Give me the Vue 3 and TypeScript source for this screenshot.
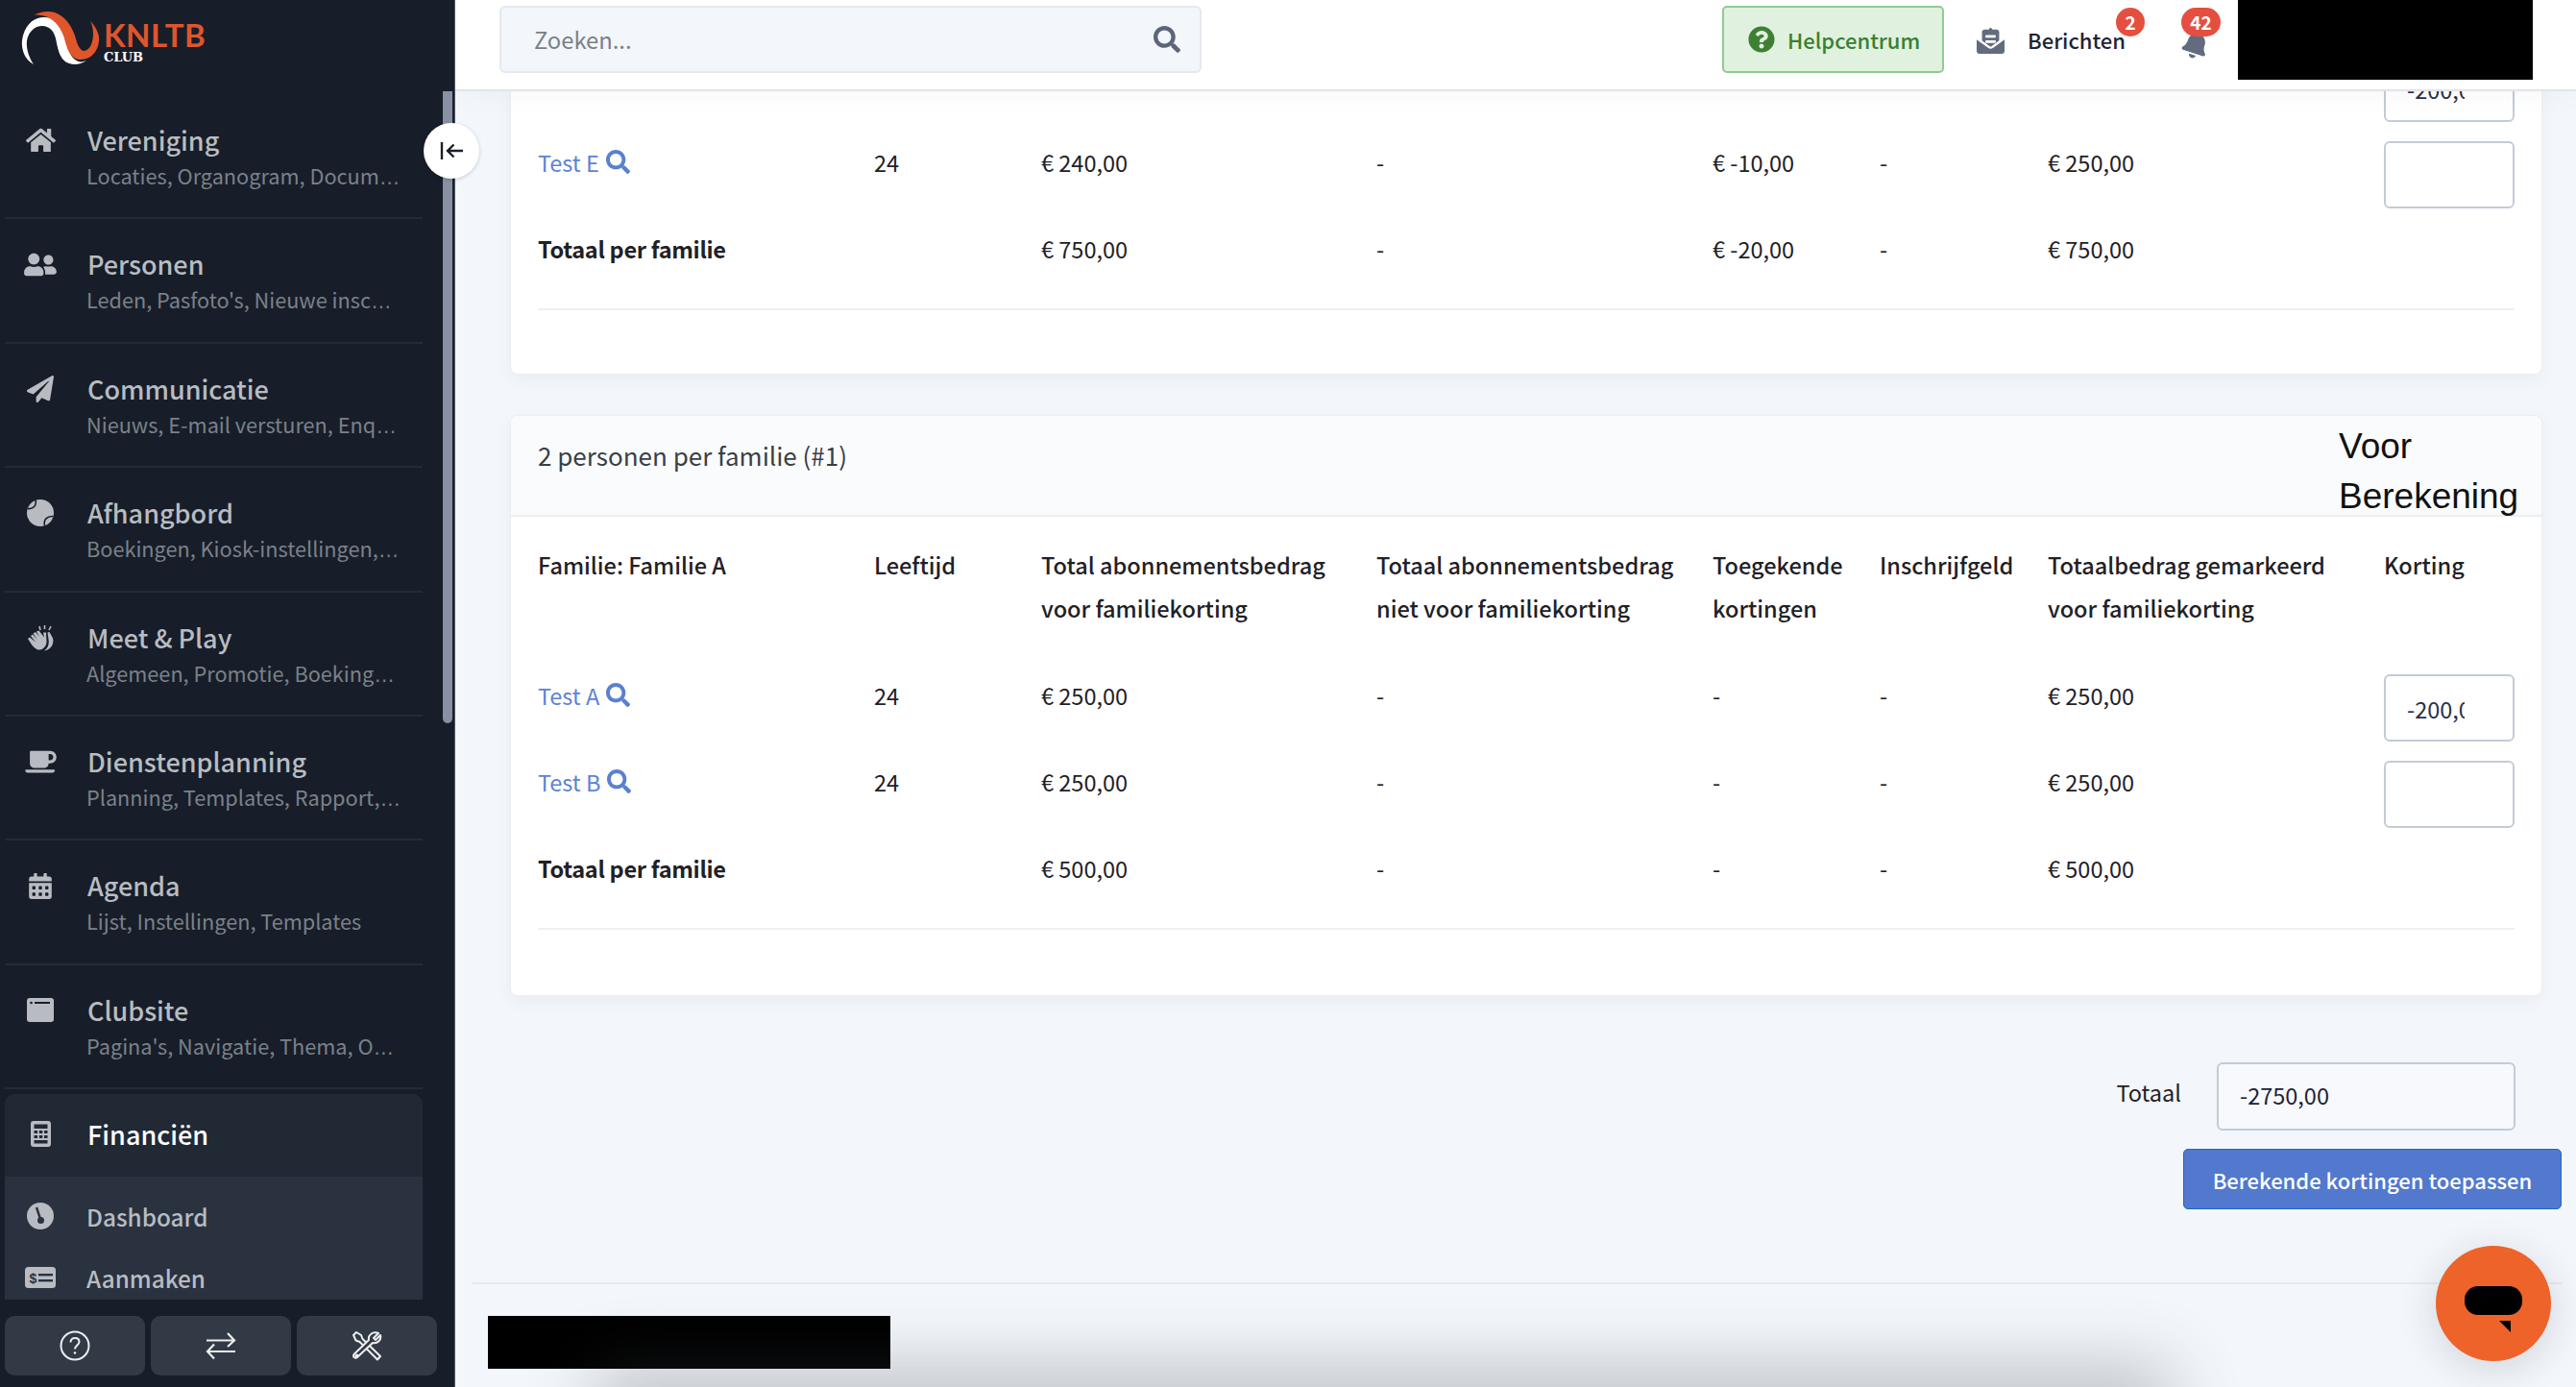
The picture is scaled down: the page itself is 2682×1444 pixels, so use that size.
<script setup lang="ts">
interface NavItem { title: string; sub: string; cut: boolean; icon: string }
const navItems: NavItem[] = [
  { title: 'Vereniging', sub: 'Locaties, Organogram, Docum', cut: true, icon: 'home' },
  { title: 'Personen', sub: "Leden, Pasfoto's, Nieuwe insc", cut: true, icon: 'users' },
  { title: 'Communicatie', sub: 'Nieuws, E-mail versturen, Enq', cut: true, icon: 'plane' },
  { title: 'Afhangbord', sub: 'Boekingen, Kiosk-instellingen,', cut: true, icon: 'ball' },
  { title: 'Meet & Play', sub: 'Algemeen, Promotie, Boeking', cut: true, icon: 'clap' },
  { title: 'Dienstenplanning', sub: 'Planning, Templates, Rapport,', cut: true, icon: 'coffee' },
  { title: 'Agenda', sub: 'Lijst, Instellingen, Templates', cut: false, icon: 'calendar' },
  { title: 'Clubsite', sub: "Pagina's, Navigatie, Thema, O", cut: true, icon: 'window' },
]
const columns = [
  ['Familie: Familie A'],
  ['Leeftijd'],
  ['Total abonnementsbedrag', 'voor familiekorting'],
  ['Totaal abonnementsbedrag', 'niet voor familiekorting'],
  ['Toegekende', 'kortingen'],
  ['Inschrijfgeld'],
  ['Totaalbedrag gemarkeerd', 'voor familiekorting'],
  ['Korting'],
]
const rowsA = [
  { name: 'Test A', age: '24', total: '€ 250,00', other: '-', granted: '-', fee: '-', marked: '€ 250,00', korting: '-200,00' },
  { name: 'Test B', age: '24', total: '€ 250,00', other: '-', granted: '-', fee: '-', marked: '€ 250,00', korting: '' },
]
const searchPath = 'M505 442.7L405.3 343c-4.5-4.5-10.6-7-17-7H372c27.6-35.3 44-79.7 44-128C416 93.1 322.9 0 208 0S0 93.1 0 208s93.1 208 208 208c48.3 0 92.7-16.4 128-44v16.3c0 6.4 2.5 12.5 7 17l99.7 99.7c9.4 9.4 24.6 9.4 33.9 0l28.3-28.3c9.4-9.4 9.4-24.6.1-34zM208 336c-70.7 0-128-57.2-128-128 0-70.7 57.2-128 128-128 70.7 0 128 57.2 128 128 0 70.7-57.2 128-128 128z'
</script>

<template>
  <div class="page">
    <aside class="sidebar">
      <div class="logo">
        <svg class="logo-mark" viewBox="0 0 110 75" width="110" height="75">
          <path fill="#ffffff" d="M35 67C25 62 22 50 23 42C25 28 33 19 44 18C54 17 62 23 66 34C69 45 72 58 78 62C82 65 85 65 90 63C84 67 78 68 72 66C62 63 60 50 58 40C56 32 51 27 44 27C36 27 30 33 28 42C27 50 30 60 35 67Z" />
          <path fill="#e0552c" d="M35 16C42 12 50 11 57 13C68 17 74 26 78 37C80 44 82 52 87 53C94 53 97 43 97 36C97 30 96 26 94 22C100 28 104 36 103 43C102 53 95 62 84 62C74 62 70 52 67 40C64 30 58 22 50 18C45 16 40 15 35 16Z" />
        </svg>
        <div class="logo-text">
          <span class="logo-knltb">KNLTB</span>
          <span class="logo-club">CLUB</span>
        </div>
      </div>

      <nav class="nav">
        <div v-for="item in navItems" :key="item.title" class="nav-item">
          <span class="nav-icon">
            <svg v-if="item.icon === 'home'" viewBox="0 0 576 512" width="31" height="28"><path fill="currentColor" d="M280.37 148.26L96 300.11V464a16 16 0 0 0 16 16l112.06-.29a16 16 0 0 0 15.92-16V368a16 16 0 0 1 16-16h64a16 16 0 0 1 16 16v95.64a16 16 0 0 0 16 16.05L464 480a16 16 0 0 0 16-16V300L295.67 148.26a12.19 12.19 0 0 0-15.3 0zM571.6 251.47L488 182.56V44.05a12 12 0 0 0-12-12h-56a12 12 0 0 0-12 12v72.61L318.47 43a48 48 0 0 0-61 0L4.34 251.47a12 12 0 0 0-1.6 16.9l25.5 31A12 12 0 0 0 45.15 301l235.22-193.74a12.19 12.19 0 0 1 15.3 0L530.9 301a12 12 0 0 0 16.9-1.6l25.5-31a12 12 0 0 0-1.7-16.93z" /></svg>
            <svg v-else-if="item.icon === 'users'" viewBox="0 0 640 512" width="34" height="27"><path fill="currentColor" d="M192 256c61.9 0 112-50.1 112-112S253.9 32 192 32 80 82.1 80 144s50.1 112 112 112zm76.8 32h-8.3c-20.8 10-43.9 16-68.5 16s-47.6-6-68.5-16h-8.3C51.6 288 0 339.6 0 403.2V432c0 26.5 21.5 48 48 48h288c26.5 0 48-21.5 48-48v-28.8c0-63.6-51.6-115.2-115.2-115.2zM480 256c53 0 96-43 96-96s-43-96-96-96-96 43-96 96 43 96 96 96zm48 32h-3.8c-13.9 4.8-28.6 8-44.2 8s-30.3-3.2-44.2-8H432c-20.4 0-39.2 5.9-55.7 15.4 24.4 26.3 39.7 61.2 39.7 99.8v38.4c0 2.2-.5 4.3-.6 6.4H592c26.5 0 48-21.5 48-48 0-61.9-50.1-112-112-112z" /></svg>
            <svg v-else-if="item.icon === 'plane'" viewBox="0 0 512 512" width="28" height="28"><path fill="currentColor" d="M476 3.2L12.5 270.6c-18.1 10.4-15.8 35.6 2.2 43.2L121 358.4l287.3-253.2c5.5-4.9 13.3 2.6 8.6 8.3L176 407v80.5c0 23.6 28.5 32.9 42.5 15.8L282 426l124.6 52.2c14.2 6 30.4-2.9 33-18.2l72-432C515 7.8 493.3-6.8 476 3.2z" /></svg>
            <svg v-else-if="item.icon === 'ball'" viewBox="0 0 28 28" width="28" height="28"><circle cx="14" cy="14" r="14" fill="currentColor" /><path d="M9 0.5C10.5 6 6.5 10.5 0.5 9.5" fill="none" stroke="#171e29" stroke-width="1.6" /><path d="M27.5 17.5C21 17 17 21 18.5 27.5" fill="none" stroke="#171e29" stroke-width="1.6" /></svg>
            <svg v-else-if="item.icon === 'clap'" viewBox="0 0 28 28" width="28" height="28"><path fill="currentColor" d="M1 15L3 13.500L9 18.500L4 12L6 10.500L11 16L6.500 9.500L9 8L13 13L10 7.500L12.500 6.500L18 13.500L17 8.500L20 8.500L20.500 18C20.500 24 15 28 10.500 26C7 24.500 4 20 1 15Z" /><path fill="currentColor" d="M21.500 8.500L23.500 8L27 14.500C28.500 20 25.500 26.500 18 27.500C22 24.500 23 21 22.700 17Z" /><path d="M14 6L13 2M18.500 5L18.500 1M23 6L25 2" stroke="currentColor" stroke-width="1.600" fill="none" /></svg>
            <svg v-else-if="item.icon === 'coffee'" viewBox="0 0 640 512" width="33" height="26"><path fill="currentColor" d="M192 384h192c53 0 96-43 96-96h32c70.6 0 128-57.4 128-128S582.6 32 512 32H120c-13.3 0-24 10.7-24 24v232c0 53 43 96 96 96zM512 96c35.3 0 64 28.7 64 64s-28.7 64-64 64h-32V96h32zm47.7 384H48.3c-47.6 0-61-64-36-64h583.3c25 0 11.800 64-35.900 64z" /></svg>
            <svg v-else-if="item.icon === 'calendar'" viewBox="0 0 448 512" width="24" height="27"><path fill="currentColor" d="M0 464c0 26.5 21.5 48 48 48h352c26.5 0 48-21.5 48-48V192H0v272zm320-196c0-6.6 5.4-12 12-12h40c6.6 0 12 5.4 12 12v40c0 6.6-5.4 12-12 12h-40c-6.6 0-12-5.4-12-12v-40zm0 128c0-6.6 5.4-12 12-12h40c6.6 0 12 5.4 12 12v40c0 6.6-5.4 12-12 12h-40c-6.6 0-12-5.4-12-12v-40zM192 268c0-6.6 5.4-12 12-12h40c6.6 0 12 5.4 12 12v40c0 6.6-5.4 12-12 12h-40c-6.6 0-12-5.4-12-12v-40zm0 128c0-6.6 5.4-12 12-12h40c6.6 0 12 5.4 12 12v40c0 6.6-5.4 12-12 12h-40c-6.6 0-12-5.4-12-12v-40zM64 268c0-6.6 5.4-12 12-12h40c6.6 0 12 5.4 12 12v40c0 6.6-5.4 12-12 12H76c-6.6 0-12-5.4-12-12v-40zm0 128c0-6.6 5.4-12 12-12h40c6.6 0 12 5.4 12 12v40c0 6.6-5.4 12-12 12H76c-6.6 0-12-5.4-12-12v-40zM400 64h-48V16c0-8.8-7.2-16-16-16h-32c-8.8 0-16 7.2-16 16v48H160V16c0-8.8-7.2-16-16-16h-32c-8.8 0-16 7.2-16 16v48H48C21.5 64 0 85.5 0 112v48h448v-48c0-26.5-21.5-48-48-48z" /></svg>
            <svg v-else viewBox="0 0 28 25" width="28" height="25"><rect width="28" height="25" rx="3" fill="currentColor" /><circle cx="4.500" cy="5" r="1.300" fill="#171e29" /><rect x="8" y="4" width="16" height="2" fill="#171e29" /></svg>
          </span>
          <div class="nav-text">
            <div class="nav-title">{{ item.title }}</div>
            <div class="nav-sub">{{ item.sub }}<span v-if="item.cut" class="dots">…</span></div>
          </div>
        </div>

        <div class="nav-active">
          <span class="nav-icon">
            <svg viewBox="0 0 21 27" width="21" height="27"><rect width="21" height="27" rx="3" fill="currentColor" /><g fill="#212934"><rect x="3.500" y="3.500" width="14" height="4.500" /><rect x="3.500" y="10" width="3.500" height="3" /><rect x="8.800" y="10" width="3.500" height="3" /><rect x="14" y="10" width="3.500" height="3" /><rect x="3.500" y="15" width="3.500" height="3" /><rect x="8.800" y="15" width="3.500" height="3" /><rect x="14" y="15" width="3.500" height="3" /><rect x="3.500" y="20" width="14" height="3.500" /></g></svg>
          </span>
          <span class="active-title">Financiën</span>
        </div>
        <div class="nav-children">
          <div class="child child-first">
            <span class="nav-icon">
              <svg viewBox="0 0 28 28" width="28" height="28"><circle cx="14" cy="14" r="14" fill="currentColor" /><path d="M10 5L14 17" stroke="#2a323f" stroke-width="2.400" /><circle cx="14.500" cy="18.500" r="3.500" fill="#2a323f" /></svg>
            </span>
            <span class="child-title">Dashboard</span>
          </div>
          <div class="child">
            <span class="nav-icon">
              <svg viewBox="0 0 32 22" width="32" height="22"><rect width="32" height="22" rx="3.500" fill="currentColor" /><text x="4.500" y="17" class="money-sign">$</text><rect x="14" y="7" width="15" height="2.400" fill="#2a323f" /><rect x="14" y="13" width="15" height="2.400" fill="#2a323f" /></svg>
            </span>
            <span class="child-title">Aanmaken</span>
          </div>
        </div>
      </nav>

      <div class="tool-row">
        <button class="tool" type="button">
          <svg viewBox="0 0 32 32" width="32" height="32" fill="none" stroke="#eceef0" stroke-width="2"><circle cx="16" cy="16" r="14.500" /><path d="M11.500 12.500C11.500 9.500 14 8 16 8C18.500 8 20.500 9.500 20.500 12C20.500 15.500 16 15.500 16 19.500" /><circle cx="16" cy="23.500" r="1.300" fill="#eceef0" stroke="none" /></svg>
        </button>
        <button class="tool" type="button">
          <svg viewBox="0 0 32 32" width="32" height="32" fill="none" stroke="#eceef0" stroke-width="2.200"><path d="M1 10.500H30M23 3L30 10.500L23 17" /><path d="M31 22H2M9 14.500L2 22L9 29.500" /></svg>
        </button>
        <button class="tool" type="button">
          <svg viewBox="0 0 32 32" width="32" height="32" fill="none" stroke="#eceef0" stroke-width="2" stroke-linejoin="round"><path d="M2 5L5 2L10 5L11.500 9L30 27L27 30.500L8.500 12L4.500 10.500Z" /><path d="M28 3L23 8L25 10L30 5C31.500 10 27 14 22 13L6.500 27.500C4 30.500 0.500 27.500 3 24.500L18 10C17 5 22 0.500 28 3Z" fill="#323a45" /><circle cx="5.500" cy="26.500" r="1" /></svg>
        </button>
      </div>

      <div class="scroll-thumb"></div>
    </aside>

    <button class="collapse" type="button">
      <svg viewBox="0 0 24 20" width="24" height="20" fill="none" stroke="#1d2026" stroke-width="2.400"><path d="M2 1V19" /><path d="M24 10H8M14.500 3.500L8 10L14.500 16.500" /></svg>
    </button>

    <main class="main">
      <header class="topbar">
        <div class="search">
          <span class="search-text">Zoeken...</span>
          <svg viewBox="0 0 512 512" width="28" height="28"><path fill="#5c6579" :d="searchPath" /></svg>
        </div>
        <div class="help">
          <svg viewBox="0 0 512 512" width="28" height="28"><path fill="#3f7f34" d="M504 256c0 136.997-111.043 248-248 248S8 392.997 8 256C8 119.083 119.043 8 256 8s248 111.083 248 248zM262.655 90c-54.497 0-89.255 22.957-116.549 63.758-3.536 5.286-2.353 12.415 2.715 16.258l34.699 26.31c5.205 3.947 12.621 3.008 16.665-2.122 17.864-22.658 30.113-35.797 57.303-35.797 20.429 0 45.698 13.148 45.698 32.958 0 14.976-12.363 22.667-32.534 33.976C247.128 238.528 216 254.941 216 296v4c0 6.627 5.373 12 12 12h56c6.627 0 12-5.373 12-12v-1.333c0-28.462 83.186-29.647 83.186-106.667 0-58.002-60.165-102-116.531-102zM256 338c-25.365 0-46 20.635-46 46 0 25.364 20.635 46 46 46s46-20.636 46-46c0-25.365-20.635-46-46-46z" /></svg>
          <span>Helpcentrum</span>
        </div>
        <div class="messages">
          <svg viewBox="0 0 512 512" width="29" height="29"><path fill="#636b7f" d="M0 250.900V464C0 490.500 21.500 512 48 512H464C490.500 512 512 490.500 512 464V250.900L302.900 401.900C274.900 422.200 237.100 422.200 209.100 401.900Z" /><path fill="#636b7f" fill-rule="evenodd" d="M98 112C98 85.500 119.500 64 146 64H223.500C233 57 243 32 256 32C269 32 279 57 288.500 64H366C392.500 64 414 85.500 414 112V270L270 374C261 380.500 251 380.500 242 374L98 270ZM176 168C167 168 160 175 160 184V200C160 209 167 216 176 216H336C345 216 352 209 352 200V184C352 175 345 168 336 168ZM176 264C167 264 160 271 160 280V296C160 305 167 312 176 312H336C345 312 352 305 352 296V280C352 271 345 264 336 264Z" /></svg>
          <span class="messages-text">Berichten</span>
          <span class="badge badge-small">2</span>
        </div>
        <div class="bell">
          <svg class="bell-icon" viewBox="0 0 448 512" width="26" height="29"><path fill="#636b7f" d="M224 512c35.32 0 63.97-28.65 63.97-64H160.03c0 35.35 28.65 64 63.97 64zm215.39-149.71c-19.32-20.76-55.47-51.99-55.47-154.29 0-77.7-54.48-139.9-127.94-155.16V32c0-17.67-14.32-32-31.98-32s-31.98 14.33-31.98 32v20.84C118.56 68.1 64.08 130.3 64.08 208c0 102.3-36.15 133.53-55.47 154.29-6 6.45-8.66 14.16-8.61 21.71.11 16.4 12.98 32 32.1 32h383.8c19.12 0 32-15.6 32.1-32 .05-7.55-2.61-15.27-8.61-21.71z" /></svg>
          <span class="badge badge-wide">42</span>
        </div>
        <div class="redact-top"></div>
      </header>

      <div class="content">
        <section class="card card-first">
          <div class="card-body">
            <div class="grid-row data-row">
              <span></span><span></span><span></span><span></span><span></span><span></span><span></span>
              <input class="korting" value="-200,00" readonly />
            </div>
            <div class="grid-row data-row">
              <span class="person">Test E<svg viewBox="0 0 512 512" width="25" height="25"><path fill="#5a80cf" :d="searchPath" /></svg></span>
              <span>24</span><span>€ 240,00</span><span>-</span><span>€ -10,00</span><span>-</span><span>€ 250,00</span>
              <input class="korting" readonly />
            </div>
            <div class="grid-row total-row">
              <span class="strong">Totaal per familie</span>
              <span></span><span>€ 750,00</span><span>-</span><span>€ -20,00</span><span>-</span><span>€ 750,00</span><span></span>
            </div>
            <div class="divider"></div>
          </div>
        </section>

        <section class="card">
          <div class="card-head">
            <span class="head-title">2 personen per familie (#1)</span>
            <span class="head-note">Voor<br />Berekening</span>
          </div>
          <div class="card-body card-body-padded">
            <div class="grid-row col-row">
              <div v-for="col in columns" :key="col[0]" class="col-head">
                <div v-for="line in col" :key="line">{{ line }}</div>
              </div>
            </div>
            <div v-for="row in rowsA" :key="row.name" class="grid-row data-row">
              <span class="person">{{ row.name }}<svg viewBox="0 0 512 512" width="25" height="25"><path fill="#5a80cf" :d="searchPath" /></svg></span>
              <span>{{ row.age }}</span><span>{{ row.total }}</span><span>{{ row.other }}</span><span>{{ row.granted }}</span><span>{{ row.fee }}</span><span>{{ row.marked }}</span>
              <input class="korting" :value="row.korting" readonly />
            </div>
            <div class="grid-row total-row">
              <span class="strong">Totaal per familie</span>
              <span></span><span>€ 500,00</span><span>-</span><span>-</span><span>-</span><span>€ 500,00</span><span></span>
            </div>
            <div class="divider"></div>
          </div>
        </section>

        <div class="sum-row">
          <span class="sum-label">Totaal</span>
          <input class="sum-input" value="-2750,00" readonly />
        </div>
        <div class="apply-row">
          <button class="apply" type="button">Berekende kortingen toepassen</button>
        </div>

        <footer class="footer">
          <div class="redact-bottom"></div>
        </footer>
      </div>
    </main>

    <div class="bottom-glow"></div>
    <div class="chat">
      <span class="chat-pill"></span>
      <span class="chat-tail"></span>
    </div>
  </div>
</template>

<style>
html, body { margin: 0; padding: 0; background: #f3f6fa; overflow: hidden; }
</style>

<style scoped>
.page {
  position: relative;
  display: flex;
  width: 2682px;
  height: 1444px;
  overflow: hidden;
  background: #f3f6fa;
  font-family: "Noto Sans CJK SC", "Noto Sans", sans-serif;
  font-size: 23.5px;
  line-height: 45px;
  color: #1f2126;
}
.sidebar {
  position: relative;
  display: flex;
  flex-direction: column;
  flex: none;
  width: 473px;
  height: 1444px;
  background: #171e29;
  border-right: 1px solid #555b66;
  z-index: 3;
}
.logo { display: flex; height: 99px; }
.logo-mark { flex: none; }
.logo-text { display: flex; flex-direction: column; margin-left: -2px; }
.logo-knltb {
  margin-top: 16px;
  font-family: "Lato", sans-serif;
  font-weight: 700;
  font-size: 33px;
  line-height: 40px;
  letter-spacing: 0.5px;
  color: #e0552c;
}
.logo-club {
  margin-top: -3px;
  font-family: "DejaVu Serif", serif;
  font-weight: 700;
  font-size: 13px;
  line-height: 14px;
  color: #fff;
}
.nav { flex: none; height: 1254px; width: 435px; margin-left: 5px; overflow: hidden; }
.nav-item {
  display: flex;
  box-sizing: border-box;
  height: 129.4px;
  padding-top: 28px;
  border-bottom: 2px solid #232b36;
  color: #b8bcc2;
}
.nav-icon {
  display: flex;
  flex: none;
  align-items: center;
  justify-content: center;
  width: 74px;
  height: 38px;
  color: #b8bcc2;
}
.nav-text { min-width: 0; margin-left: 11px; width: 340px; }
.nav-title {
  margin-left: 1px;
  font-weight: 500;
  font-size: 27px;
  line-height: 38px;
  color: #b8bcc2;
}
.nav-sub {
  margin-top: -1px;
  font-size: 21.7px;
  line-height: 38px;
  white-space: nowrap;
  color: #7b818a;
}
.dots { font-family: "Liberation Sans", sans-serif; letter-spacing: 1.5px; }
.nav-active {
  display: flex;
  align-items: center;
  box-sizing: border-box;
  height: 86px;
  margin-top: 5px;
  padding-bottom: 3px;
  background: #212934;
  border-radius: 10px 10px 0 0;
}
.active-title { margin-left: 12px; font-weight: 500; font-size: 27px; color: #fff; }
.nav-children { height: 128px; background: #2a323f; overflow: hidden; }
.child { display: flex; align-items: center; height: 64px; }
.child-first { margin-top: 9px; }
.child-title { margin-left: 11px; font-weight: 500; font-size: 24.3px; color: #b8bcc2; }
.money-sign { font-family: "Liberation Sans", sans-serif; font-weight: 700; font-size: 14px; fill: #2a323f; }
.tool-row { display: flex; gap: 5.5px; margin: 17px 0 0 5px; width: 450px; }
.tool {
  display: flex;
  flex: 1;
  align-items: center;
  justify-content: center;
  height: 62px;
  padding: 0;
  background: #323a45;
  border: none;
  border-radius: 10px;
}
.scroll-thumb {
  position: absolute;
  top: 95px;
  left: 461px;
  box-sizing: border-box;
  width: 10px;
  height: 658px;
  background: #8791a3;
  border-radius: 0 0 5px 5px;
}
.collapse {
  position: absolute;
  top: 128px;
  left: 441px;
  z-index: 5;
  display: flex;
  align-items: center;
  justify-content: center;
  width: 58px;
  height: 58px;
  padding: 0;
  background: #fff;
  border: none;
  border-radius: 50%;
  box-shadow: 0 1px 4px rgba(0, 0, 0, 0.18);
}
.main { display: flex; flex-direction: column; flex: 1; min-width: 0; }
.topbar {
  position: relative;
  z-index: 2;
  display: flex;
  flex: none;
  box-sizing: border-box;
  align-items: flex-start;
  height: 95px;
  background: #fff;
  border-bottom: 2px solid #e2e4e8;
  box-shadow: 0 3px 30px rgba(0, 0, 0, 0.035);
}
.search {
  display: flex;
  flex: none;
  box-sizing: border-box;
  align-items: center;
  justify-content: space-between;
  width: 731px;
  height: 70px;
  margin: 6px 0 0 46px;
  padding: 0 20px 0 34px;
  background: #f3f6fa;
  border: 2px solid #e5e9ef;
  border-radius: 6px;
}
.search-text { color: #7a7f88; font-size: 23.8px; line-height: 40px; }
.help {
  display: flex;
  flex: none;
  box-sizing: border-box;
  align-items: center;
  gap: 13px;
  width: 231px;
  height: 70px;
  margin: 6px 0 0 542px;
  padding-left: 25px;
  background: #e0f1e0;
  border: 2px solid #92ca92;
  border-radius: 5px;
  font-weight: 500;
  font-size: 22px;
  color: #39802f;
}
.messages {
  position: relative;
  display: flex;
  flex: none;
  align-items: center;
  width: 213px;
  height: 29px;
  margin: 27px 0 0 34px;
}
.messages-text { margin-left: 24px; font-weight: 500; font-size: 22px; color: #1d2433; }
.badge {
  position: absolute;
  top: -19px;
  display: flex;
  align-items: center;
  justify-content: center;
  height: 30px;
  background: #e44f3f;
  border-radius: 15px;
  font-weight: 700;
  font-size: 19px;
  line-height: 30px;
  color: #fff;
}
.badge-small { left: 145px; width: 30px; }
.badge-wide { left: 0; top: 8px; width: 41px; }
.bell { position: relative; flex: none; width: 59px; height: 95px; }
.bell-icon { position: absolute; top: 32px; left: 2px; transform: rotate(18deg); }
.redact-top { flex: none; width: 307px; height: 83px; background: #000; }
.content { flex: 1; min-height: 0; overflow: hidden; padding: 0 35px 0 57px; }
.card {
  background: #fff;
  border: 1px solid #eceef1;
  border-radius: 8px;
  box-shadow: 0 6px 18px rgba(30, 40, 60, 0.045);
}
.card + .card { margin-top: 42px; }
.card-first { margin-top: -39px; height: 334px; box-sizing: border-box; }
.card-body { padding: 0 28px 0 28px; }
.card-body-padded { padding-top: 28px; padding-bottom: 68px; }
.card-head {
  display: flex;
  box-sizing: border-box;
  justify-content: space-between;
  height: 105px;
  padding: 0 8px 0 28px;
  background: #fafbfc;
  border-bottom: 2px solid #eceef1;
  border-radius: 8px 8px 0 0;
}
.head-title { margin-top: 18px; font-size: 26px; color: #3a3f47; }
.head-note {
  width: 203px;
  margin-top: 6px;
  font-family: "Liberation Sans", sans-serif;
  font-size: 37px;
  line-height: 52px;
  color: #111;
}
.grid-row { display: grid; grid-template-columns: 350px 174px 349px 350px 174px 175px 350px 136px; }
.col-row { height: 136px; }
.col-head { font-weight: 500; white-space: nowrap; }
.data-row { height: 90px; }
.total-row { height: 84px; }
.person { display: flex; align-items: flex-start; color: #5c84d4; }
.person svg { margin: 9px 0 0 7px; }
.strong { font-weight: 700; letter-spacing: -0.3px; }
.divider { height: 2px; background: #eeeff1; }
.korting {
  box-sizing: border-box;
  width: 136px;
  height: 70px;
  padding: 2px 50px 0 22px;
  background: #fff;
  border: 2px solid #c3cbd9;
  border-radius: 6px;
  outline: none;
  font-family: inherit;
  font-size: 23.5px;
  color: #28304a;
}
.sum-row { display: flex; align-items: flex-start; justify-content: flex-end; margin: 69px 28px 0 0; }
.sum-label { margin-right: 37px; font-size: 23.5px; line-height: 62px; }
.sum-input {
  box-sizing: border-box;
  width: 311px;
  height: 71px;
  padding: 0 22px 3px;
  background: #f8f9fd;
  border: 2px solid #c3cbd9;
  border-radius: 6px;
  outline: none;
  font-family: inherit;
  font-size: 23.5px;
  color: #1d2433;
}
.apply-row { display: flex; justify-content: flex-end; margin: 19px -20px 0 0; }
.apply {
  width: 394px;
  height: 63px;
  padding: 0;
  background: #5279cd;
  border: 1px solid #1c66d0;
  border-radius: 5px;
  font-family: inherit;
  font-weight: 500;
  font-size: 22px;
  color: #fff;
}
.footer {
  margin: 76px -20px 0 -39px;
  padding: 33px 0 0 16px;
  border-top: 2px solid #e6eaee;
}
.redact-bottom { width: 419px; height: 55px; background: #000; }
.bottom-glow {
  position: absolute;
  left: 640px;
  bottom: -30px;
  width: 1600px;
  height: 30px;
  box-shadow: 0 0 70px 20px rgba(60, 65, 75, 0.3);
  z-index: 1;
  pointer-events: none;
}
.chat {
  position: absolute;
  left: 2536px;
  top: 1297px;
  z-index: 4;
  width: 120px;
  height: 120px;
  background: #ee6329;
  border-radius: 50%;
  box-shadow: 0 8px 40px rgba(30, 40, 50, 0.16);
}
.chat-pill { position: absolute; left: 30px; top: 42px; width: 60px; height: 30px; background: #000; border-radius: 14px; }
.chat-tail {
  position: absolute;
  left: 66px;
  top: 78px;
  width: 12px;
  height: 12px;
  background: #000;
  clip-path: polygon(0 0, 100% 0, 100% 100%);
}
</style>
